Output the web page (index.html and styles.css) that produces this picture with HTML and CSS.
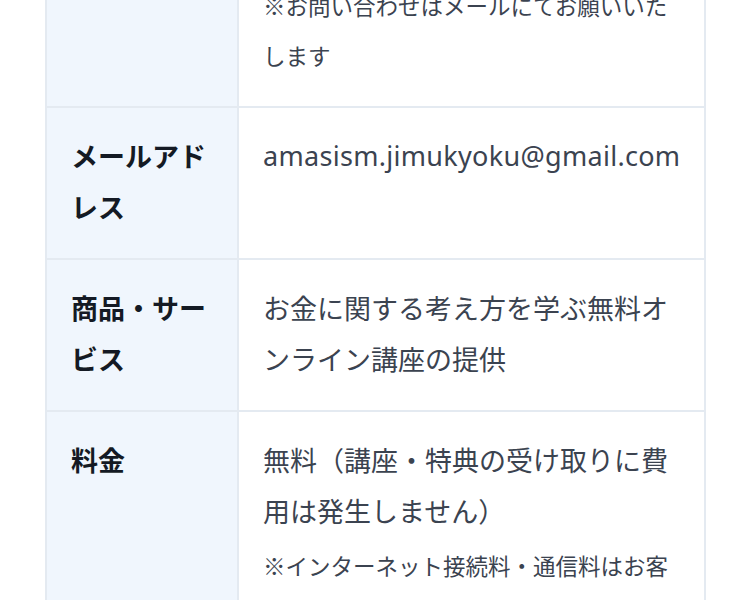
FILE: index.html
```html
<!DOCTYPE html>
<html lang="ja">
<head>
<meta charset="utf-8">
<link rel="stylesheet" href="styles.css">
</head>
<body>
<div class="page">
  <div class="spec">
    <div class="th">電話番号</div>
    <div class="td">
      <p class="main">非公開</p>
      <p class="note">※お問い合わせはメールにてお願いいたします</p>
    </div>
    <div class="th">メールアドレス</div>
    <div class="td">
      <p class="main email">amasism.jimukyoku@gmail.com</p>
    </div>
    <div class="th">商品・サービス</div>
    <div class="td">
      <p class="main">お金に関する考え方を学ぶ無料オンライン講座の提供</p>
    </div>
    <div class="th">料金</div>
    <div class="td">
      <p class="main">無料（講座・特典の受け取りに費用は発生しません）</p>
      <p class="note">※インターネット接続料・通信料はお客様のご負担となります</p>
    </div>
  </div>
</div>
</body>
</html>
```
FILE: styles.css
```css
html, body {
  margin: 0;
  padding: 0;
  background: #ffffff;
}
body {
  font-family: "Noto Sans CJK JP", "Noto Sans", sans-serif;
  overflow: hidden;
}
.page {
  margin-top: -97px;
  margin-left: 45px;
  width: 661px;
}
.spec {
  display: grid;
  grid-template-columns: 192px 1fr;
  border-left: 2px solid #e4eaf1;
}
.th {
  background: #f0f6fd;
  color: #141a24;
  font-weight: 700;
  font-size: 27px;
  line-height: 51px;
  padding: 22px 22px 26px 24px;
  border-right: 2px solid #e4eaf1;
  border-bottom: 2px solid #e4eaf1;
}
.td {
  background: #ffffff;
  color: #3b4350;
  padding: 22px 24px 26px;
  border-right: 2px solid #e4eaf1;
  border-bottom: 2px solid #e4eaf1;
}
.main {
  margin: 0;
  font-size: 27px;
  line-height: 51px;
}
.email {
  font-family: "Noto Sans", sans-serif;
  letter-spacing: 0.3px;
}
.note {
  margin: 4px 0 0;
  font-size: 22.5px;
  line-height: 50px;
}
```
